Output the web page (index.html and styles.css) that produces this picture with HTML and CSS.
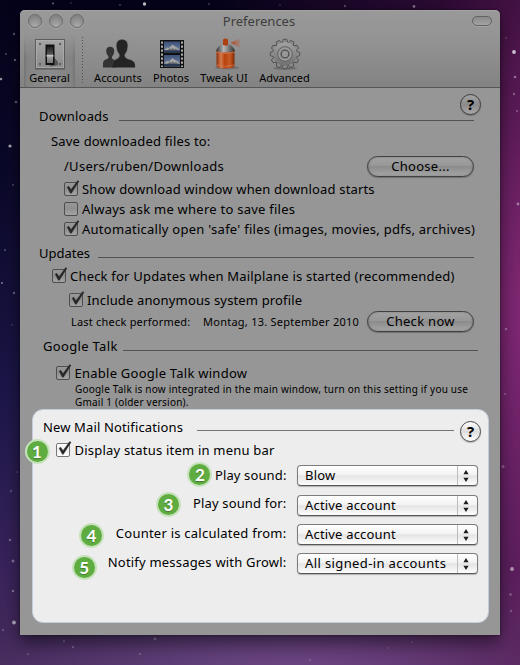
FILE: index.html
```html
<!DOCTYPE html>
<html lang="en">
<head>
<meta charset="utf-8">
<title>Preferences</title>
<link rel="stylesheet" href="styles.css">
</head>
<body>
<svg class="stars" viewBox="0 0 520 665" aria-hidden="true">
  <g fill="#fff">
    <circle cx="144.500" cy="4" r="1.700" opacity=".75"/><circle cx="53" cy="3.500" r="1" opacity=".4"/><circle cx="71" cy="3" r=".8" opacity=".25"/>
    <circle cx="120" cy="5" r=".9" opacity=".25"/><circle cx="209" cy="4" r=".9" opacity=".25"/><circle cx="345" cy="6" r="1.100" opacity=".3"/><circle cx="414" cy="6.500" r="1.400" opacity=".4"/><circle cx="280" cy="5" r=".9" opacity=".15"/>
    <circle cx="514" cy="52" r="1.900" opacity=".75"/><circle cx="515" cy="77" r="1.300" opacity=".4"/><circle cx="514" cy="94" r="1.200" opacity=".3"/><circle cx="506" cy="38" r="1" opacity=".2"/><circle cx="517" cy="111" r="1" opacity=".3"/><circle cx="518" cy="204" r="1.400" opacity=".4"/>
    <circle cx="14" cy="34" r="1.200" opacity=".3"/><circle cx="6" cy="54" r="1.100" opacity=".25"/><circle cx="15" cy="60" r="1.200" opacity=".35"/><circle cx="1" cy="79" r="1.300" opacity=".55"/><circle cx="16" cy="102" r="1.300" opacity=".35"/><circle cx="10" cy="146" r="1.600" opacity=".65"/>
    <circle cx="13" cy="185" r="1" opacity=".25"/><circle cx="5" cy="250" r="1" opacity=".3"/><circle cx="2" cy="283" r="1" opacity=".45"/><circle cx="14" cy="293" r="1.200" opacity=".35"/><circle cx="12" cy="325" r="1" opacity=".15"/><circle cx="17" cy="472" r="1" opacity=".15"/>
    <circle cx="11" cy="491" r="1.300" opacity=".2"/><circle cx="10" cy="540" r="1.300" opacity=".3"/><circle cx="13" cy="561" r="1.500" opacity=".35"/><circle cx="13" cy="591" r="1.300" opacity=".35"/><circle cx="14" cy="622.500" r="1.900" opacity=".6"/><circle cx="3" cy="630" r="1.200" opacity=".2"/>
    <circle cx="155" cy="639" r="1.400" opacity=".3"/><circle cx="64" cy="641" r="1.100" opacity=".25"/><circle cx="73" cy="647" r="1.100" opacity=".3"/><circle cx="28" cy="654" r="1" opacity=".2"/><circle cx="140" cy="654" r="1" opacity=".25"/><circle cx="388" cy="648" r="1" opacity=".15"/><circle cx="412" cy="642" r="1.100" opacity=".15"/>
    <circle cx="506" cy="329" r="1.300" opacity=".3"/><circle cx="505" cy="394" r="1.300" opacity=".2"/><circle cx="503" cy="466.500" r="1.500" opacity=".3"/><circle cx="512" cy="569" r="1.900" opacity=".55"/><circle cx="510.500" cy="594.500" r="1.300" opacity=".3"/><circle cx="511" cy="611" r="1.200" opacity=".25"/><circle cx="310" cy="660" r="1.200" opacity=".15"/>
  </g>
</svg>

<svg class="defs" aria-hidden="true">
  <defs>
    <symbol id="tick" viewBox="0 0 18 18">
      <path d="M4.200 8.200 L5.700 7.300 L8 10.800 L14.600 1.700 L16 2.200 L8.300 14.200 H7.400Z" fill="currentColor" stroke="currentColor" stroke-width=".5"/>
    </symbol>
    <symbol id="arrows" viewBox="0 0 6 12">
      <path d="M3 0 L5.600 4.200 H.4Z M3 12 L5.600 7.800 H.4Z" fill="#1c1c1c"/>
    </symbol>
  </defs>
</svg>

<main class="window">
  <header class="titlebar">
    <div class="lights"><i></i><i></i><i></i></div>
    <h1>Preferences</h1>
    <i class="pill"></i>
  </header>

  <nav class="toolbar">
    <a class="tool tool-general selected">
      <svg width="32" height="32" viewBox="0 0 32 32">
        <defs><linearGradient id="plate" x2="0" y2="1"><stop stop-color="#a6a6a6"/><stop offset="1" stop-color="#8a8a8a"/></linearGradient>
        <linearGradient id="lever" x2="0" y2="1"><stop stop-color="#222"/><stop offset=".45" stop-color="#555"/><stop offset=".5" stop-color="#aaa"/><stop offset="1" stop-color="#777"/></linearGradient></defs>
        <rect x="1" y="30" width="30" height="1.500" fill="#555"/>
        <rect x="1.500" y="1.500" width="29" height="29" fill="url(#plate)" stroke="#5c5c5c"/>
        <rect x="2.500" y="2.500" width="27" height="27" fill="none" stroke="#b2b2b2" stroke-width=".7"/>
        <g fill="#606060"><circle cx="6" cy="6" r="1.200"/><circle cx="26" cy="6" r="1.200"/><circle cx="6" cy="26" r="1.200"/><circle cx="26" cy="26" r="1.200"/></g>
        <path d="M19 18 L24 24 V27 L16 28.500Z" fill="#444" opacity=".75"/>
        <rect x="11.500" y="6.500" width="9" height="20.500" fill="#111"/>
        <rect x="13" y="9" width="6" height="16" fill="url(#lever)"/>
        <rect x="12.500" y="17" width="7" height="1.500" fill="#c0c0c0"/>
      </svg>
      <span>General</span>
    </a>
    <i class="divider"></i>
    <a class="tool tool-accounts">
      <svg width="34" height="32" viewBox="0 0 34 32">
        <path d="M1 29.500 V25 Q1.300 22.200 4.500 21.300 Q6.800 20.500 6.600 18.700 Q4 15.500 4.100 12.500 Q4.500 8.700 8.200 8.700 Q12 8.700 12.300 12.500 Q12.500 15.500 10 18.700 V20.500 L14 23 V29.500Z" fill="#333"/>
        <path d="M10 29.500 V27 Q10.200 22.600 14 21.400 Q18 20 17.600 16.800 Q14.500 13 14.400 7.800 Q14.600 1.500 20 1.500 Q25.500 1.500 25.700 7.800 Q25.600 13 22.600 16.800 Q22.300 20 26.200 21.300 Q32.600 22.700 33 26.700 V29.500Z" fill="#242424" stroke="#555" stroke-width=".4"/>
      </svg>
      <span>Accounts</span>
    </a>
    <a class="tool tool-photos">
      <svg width="26" height="32" viewBox="0 0 26 32">
        <defs><linearGradient id="sky" x2="0" y2="1"><stop stop-color="#3a5078"/><stop offset="1" stop-color="#7c8ba6"/></linearGradient></defs>
        <rect x="1" y="2" width="24" height="28" fill="#111"/>
        <path d="M3 3.500V29M23 3.500V29" stroke="#aaa" stroke-width="2" stroke-dasharray="2.200 1.800"/>
        <rect x="5" y="3.500" width="16" height="11.500" fill="url(#sky)"/>
        <path d="M5 12.500 L8 9.500 L10 10 L13.500 6.500 L16 8.500 L18 9.500 L21 12.500Z" fill="#a6a6a6"/><path d="M8 12.500 l3-2.500 1 1.500 2-2 1 2 2-1 2 2z" fill="#6a6d74"/><rect x="5" y="12.300" width="16" height="2.700" fill="#2a3952"/>
        <rect x="5" y="17" width="16" height="11.500" fill="url(#sky)"/>
        <path d="M5 26 L8 23 L10 23.500 L13.500 20 L16 22 L18 23 L21 26Z" fill="#a6a6a6"/><path d="M8 26 l3-2.500 1 1.500 2-2 1 2 2-1 2 2z" fill="#6a6d74"/><rect x="5" y="25.800" width="16" height="2.700" fill="#2a3952"/>
      </svg>
      <span>Photos</span>
    </a>
    <a class="tool tool-tweak">
      <svg width="30" height="32" viewBox="0 0 30 32">
        <defs><linearGradient id="can"><stop stop-color="#8c2e06"/><stop offset=".25" stop-color="#d47b50"/><stop offset=".45" stop-color="#b9430f"/><stop offset=".75" stop-color="#c85a25"/><stop offset="1" stop-color="#7b2705"/></linearGradient>
        <linearGradient id="cap"><stop stop-color="#333"/><stop offset=".4" stop-color="#b5b5b5"/><stop offset="1" stop-color="#303030"/></linearGradient>
        <linearGradient id="spray"><stop stop-color="#b53c12"/><stop offset="1" stop-color="#b56a50" stop-opacity=".3"/></linearGradient></defs>
        <ellipse cx="13" cy="29.800" rx="12" ry="1.700" fill="#666" opacity=".7"/>
        <path d="M2.500 12 H20.500 V28 Q20 30.500 11.500 30.500 Q3 30.500 2.500 28Z" fill="url(#can)"/>
        <path d="M2.200 13 Q2.600 9 8 6.500 H15 Q20.400 9 20.800 13 Q11.500 16 2.200 13Z" fill="url(#cap)"/>
        <path d="M2.500 14.300 Q11.500 17 20.500 14.300 M2.500 27 Q11.500 29.800 20.500 27" fill="none" stroke="#ce7650" stroke-width=".8"/>
        <path d="M9 7 V1.500 Q11.500 -.5 14 1.500 V7 Q11.500 8 9 7Z" fill="#ae3f12"/>
        <path d="M16.500 4.700 L26 .7 V9.700Z" fill="url(#spray)"/>
      </svg>
      <span>Tweak UI</span>
    </a>
    <a class="tool tool-advanced">
      <svg width="32" height="32" viewBox="0 0 32 32">
        <defs><linearGradient id="metal" x2="0" y2="1"><stop stop-color="#a2a2a2"/><stop offset="1" stop-color="#6f6f6f"/></linearGradient></defs>
        <ellipse cx="16" cy="30.300" rx="12" ry="1.500" fill="#5c5c5c" opacity=".7"/>
        <circle cx="16" cy="16" r="12" fill="#8b8b8b" stroke="#484848" stroke-width=".9"/>
        <g fill="#8b8b8b" stroke="#484848" stroke-width=".8">
          <path id="teeth" d="M13.300 4.500 L14.300 1.300 H17.700 L18.700 4.500 V27.500 L17.700 30.700 H14.300 L13.300 27.500Z"/>
          <use href="#teeth" transform="rotate(30 16 16)"/><use href="#teeth" transform="rotate(60 16 16)"/><use href="#teeth" transform="rotate(90 16 16)"/><use href="#teeth" transform="rotate(120 16 16)"/><use href="#teeth" transform="rotate(150 16 16)"/>
        </g>
        <circle cx="16" cy="16" r="11.800" fill="url(#metal)"/>
        <circle cx="16" cy="16" r="7.300" fill="#8a8a8a" stroke="#606060"/>
        <circle cx="16" cy="16" r="6" fill="none" stroke="#a8a8a8" stroke-width=".8"/>
        <circle cx="16" cy="16" r="3.800" fill="#979797" stroke="#494949" stroke-width="1.100"/>
      </svg>
      <span>Advanced</span>
    </a>
  </nav>

  <section class="body">
    <div class="heading h-downloads"><h2>Downloads</h2><hr><button class="help">?</button></div>
    <div class="row r-save"><span>Save downloaded files to:</span></div>
    <div class="row r-path"><span>/Users/ruben/Downloads</span><button class="push push-choose">Choose...</button></div>
    <label class="row r-show"><i class="box"><svg><use href="#tick"/></svg></i><span>Show download window when download starts</span></label>
    <label class="row r-ask"><i class="box"></i><span>Always ask me where to save files</span></label>
    <label class="row r-auto"><i class="box"><svg><use href="#tick"/></svg></i><span>Automatically open 'safe' files (images, movies, pdfs, archives)</span></label>

    <div class="heading h-updates"><h2>Updates</h2><hr></div>
    <label class="row r-check"><i class="box"><svg><use href="#tick"/></svg></i><span>Check for Updates when Mailplane is started (recommended)</span></label>
    <label class="row r-include"><i class="box"><svg><use href="#tick"/></svg></i><span>Include anonymous system profile</span></label>
    <div class="row r-last"><span class="last-label">Last check performed:</span><span class="last-date">Montag, 13. September 2010</span><button class="push push-check">Check now</button></div>

    <div class="heading h-talk"><h2>Google Talk</h2><hr></div>
    <label class="row r-enable"><i class="box"><svg><use href="#tick"/></svg></i><span>Enable Google Talk window</span></label>
    <p class="note">Google Talk is now integrated in the main window, turn on this setting if you use<br>Gmail 1 (older version).</p>
  </section>

  <section class="panel">
    <div class="heading h-mail"><h2>New Mail Notifications</h2><hr><button class="help">?</button></div>
    <label class="row r-display"><b class="badge">1</b><i class="box"><svg><use href="#tick"/></svg></i><span>Display status item in menu bar</span></label>
    <div class="field f-sound"><span class="name"><b class="badge">2</b>Play sound:</span><button class="select">Blow<svg><use href="#arrows"/></svg></button></div>
    <div class="field f-for"><span class="name"><b class="badge">3</b>Play sound for:</span><button class="select">Active account<svg><use href="#arrows"/></svg></button></div>
    <div class="field f-counter"><span class="name"><b class="badge">4</b>Counter is calculated from:</span><button class="select">Active account<svg><use href="#arrows"/></svg></button></div>
    <div class="field f-growl"><span class="name"><b class="badge">5</b>Notify messages with Growl:</span><button class="select wide">All signed-in accounts<svg><use href="#arrows"/></svg></button></div>
  </section>
</main>
</body>
</html>
```
FILE: styles.css
```css
* { box-sizing: border-box; }

body {
  margin: 0;
  width: 520px;
  height: 665px;
  overflow: hidden;
  padding: 10px 20px 30px;
  position: relative;
  font: 13px/20px "Noto Sans", "Open Sans", sans-serif;
  letter-spacing: .18px;
  color: #000;
  background:
    radial-gradient(ellipse 190px 360px at 540px 310px, rgba(142, 44, 124, .9), rgba(142, 44, 124, 0)),
    radial-gradient(ellipse 320px 170px at 300px 700px, rgba(124, 84, 148, .8), rgba(124, 84, 148, 0)),
    linear-gradient(90deg, rgba(90, 20, 80, 0) 40%, rgba(90, 20, 80, .6)),
    linear-gradient(180deg, #05031a 0, #0a0828 25%, #1b1647 58%, #38235a 85%, #472c5e 100%);
}

.stars { position: absolute; inset: 0; width: 520px; height: 665px; }
.defs { position: absolute; width: 0; height: 0; }

h1, h2, p { margin: 0; font: inherit; }
button { font: inherit; letter-spacing: inherit; color: inherit; padding: 0; margin: 0; }
span, h1, h2, p, button { white-space: nowrap; }

.window {
  position: relative;
  width: 480px;
  height: 625px;
  display: flex;
  flex-direction: column;
  background: #969696;
  border-radius: 5px 5px 0 0;
  box-shadow: 0 8px 18px rgba(0, 0, 0, .5), 0 0 3px rgba(0, 0, 0, .45);
}

/* title bar and toolbar */
.titlebar {
  height: 24px;
  padding: 0 8px;
  display: grid;
  grid-template-columns: 120px 1fr 120px;
  align-items: start;
  background: linear-gradient(#999, #959595);
  border-radius: 5px 5px 0 0;
  border-top: 1px solid #a4a4a4;
}
.titlebar h1 { text-align: center; color: #3d3d3d; letter-spacing: 0; margin-left: -2px; }
.lights { display: flex; gap: 7px; padding-top: 3px; }
.lights i {
  width: 14px;
  height: 14px;
  border-radius: 50%;
  border: 1px solid #6c6c6c;
  background: radial-gradient(circle at 50% 90%, #aaa, #858585 75%);
  box-shadow: 0 1px 0 #a9a9a9;
}
.pill {
  justify-self: end;
  width: 20px;
  height: 10px;
  margin-top: 5px;
  border: 1px solid #626262;
  border-radius: 5px;
  background: linear-gradient(#8a8a8a, #a3a3a3);
  box-shadow: 0 1px 0 #a5a5a5;
}
.toolbar {
  height: 54px;
  padding-left: 4px;
  display: flex;
  background: linear-gradient(#959595, #838383);
  border-bottom: 1px solid #565656;
}
.tool {
  height: 53px;
  display: flex;
  flex-direction: column;
  align-items: center;
  font-size: 11px;
  line-height: 16px;
  letter-spacing: 0;
}
.tool svg { margin: 4px 0 0; flex: none; position: relative; left: 1px; }
.tool-general { width: 51px; }
.tool-general svg { left: .5px; }
.selected {
  background:
    linear-gradient(#959595, rgba(149, 149, 149, 0) 45%),
    linear-gradient(90deg, #747474 0, #838383 6%, #8c8c8c 50%, #838383 94%, #747474 100%);
}
.divider {
  width: 1px;
  height: 47px;
  margin: 3px 11px 0 7px;
  background: repeating-linear-gradient(#4e4e4e 0 1px, transparent 1px 3px);
}
.tool-accounts { width: 48px; margin-right: 11px; letter-spacing: .1px; }
.tool-photos { width: 36px; margin-right: 11px; }
.tool-tweak { width: 48px; margin-right: 11px; }
.tool-tweak svg { left: 5px; top: -.5px; }
.tool-advanced { width: 51px; }
.tool-advanced svg { left: .5px; top: -.5px; }

/* rows */
.body { padding-top: 18px; height: 321px; flex: none; }
.heading { position: relative; height: 20px; display: flex; align-items: flex-start; }
.heading hr { flex: 1; height: 1px; border: 0; margin: 14px 0 0; background: #525252; }
.row { display: flex; align-items: center; height: 20px; }

.h-downloads { margin: 0 26px 0 19px; }
.h-downloads hr { margin-left: 10px; }
.r-save { margin: 5px 0 0 31px; }
.r-path { margin: 5px 26px 0 44px; height: 21px; justify-content: space-between; letter-spacing: .27px; }
.r-path span { margin-top: -1px; }
.r-show { margin: 2px 0 0 44px; letter-spacing: .16px; }
.r-ask { margin-left: 44px; letter-spacing: .25px; }
.r-auto { margin-left: 44px; letter-spacing: .265px; }
.h-updates { margin: 4px 26px 0 19px; letter-spacing: 0; }
.h-updates hr { margin-left: 8px; }
.r-check { margin: 3px 0 0 32px; letter-spacing: .2px; }
.r-include { margin: 4px 0 0 49px; letter-spacing: .15px; }
.r-last { margin: 1px 26px 0 51px; height: 21px; font-size: 11px; letter-spacing: .21px; }
.last-label { width: 132px; }
.last-date { letter-spacing: .25px; }
.h-talk { margin: 4px 22px 0 23px; letter-spacing: .33px; }
.h-talk hr { margin-left: 5px; }
.r-enable { margin: 7px 0 0 36px; letter-spacing: .25px; }
.note { margin: 0 0 0 55px; font-size: 10px; line-height: 13px; letter-spacing: .21px; }

.box {
  position: relative;
  flex: none;
  width: 14px;
  height: 14px;
  margin-right: 4px;
  border: 1px solid #4e4e4e;
  border-radius: 2px;
  background: linear-gradient(#999, #8f8f8f 45%, #a3a3a3);
}
.box svg { position: absolute; left: -2px; top: -4px; width: 18px; height: 18px; color: #262626; }
.r-enable .box, .r-display .box { margin-right: 4.500px; }

.push {
  width: 107px;
  height: 21px;
  font-size: 13px;
  line-height: 18px;
  letter-spacing: .3px;
  border: 1px solid #404040;
  border-radius: 11px;
  background: linear-gradient(#a3a3a3, #979797 45%, #8c8c8c 50%, #a5a5a5);
  box-shadow: 0 1px 1px rgba(0, 0, 0, .25), inset 0 0 2px rgba(0, 0, 0, .3);
  padding-bottom: 2px;
}
.push-check { margin-left: auto; }

.help {
  position: absolute;
  width: 21px;
  height: 21px;
  border: 1.500px solid #3c3c3c;
  border-radius: 50%;
  background: linear-gradient(#a3a3a3, #8b8b8b 50%, #a6a6a6);
  font: bold 15px/17px "Noto Sans", sans-serif;
  letter-spacing: 0;
  text-align: center;
  box-shadow: 0 1px 1px rgba(0, 0, 0, .25);
}
.h-downloads .help { right: -7px; top: -12px; }

/* highlighted panel */
.panel {
  position: relative;
  flex: none;
  width: 457px;
  height: 214px;
  margin: 0 0 0 12px;
  padding-top: 7px;
  background: #ededed;
  border: 1px solid #c3cbdc;
  border-radius: 11px;
}
.h-mail { margin: 0 34px 0 10px; letter-spacing: .14px; }
.h-mail hr { margin: 13px 0 0 14px; background: #757575; }
.h-mail .help { right: -27px; top: 4px; border-color: #484848; background: linear-gradient(#fff, #dcdcdc 50%, #fff); }
.r-display { position: relative; margin: 3px 0 0 23px; letter-spacing: .21px; }
.r-display .box { border-color: #777; background: linear-gradient(#fff, #ececec 45%, #fff); }
.field {
  position: relative;
  height: 21px;
  display: grid;
  grid-template-columns: 253.500px 181px;
  column-gap: 10.500px;
}
.name { position: relative; justify-self: end; height: 20px; }
.f-sound { margin-top: 5px; letter-spacing: .13px; }
.f-for { margin-top: 9px; letter-spacing: .15px; }
.f-for .name { margin-top: -2px; }
.f-counter { margin-top: 8px; letter-spacing: .24px; }
.f-counter .name { margin-top: -1px; }
.f-growl { margin-top: 8px; letter-spacing: .2px; }
.f-growl .name { margin-top: -1px; }

.select {
  display: flex;
  align-items: center;
  height: 21px;
  padding: 0 0 1px 7px;
  line-height: 18px;
  letter-spacing: .18px;
  text-align: left;
  border: 1px solid #7c7c7c;
  border-bottom-color: #555;
  border-radius: 4px;
  background:
    linear-gradient(#bdbdbd, #bdbdbd) 159px 0 / 1px 100% no-repeat,
    linear-gradient(#fff, #f3f3f3 45%, #e4e4e4 52%, #fdfdfd);
  box-shadow: 0 1px 1px rgba(0, 0, 0, .25);
}
.select.wide { letter-spacing: .38px; }
.select svg { width: 6px; height: 12px; margin: 1px 8px 0 auto; }

.badge {
  position: absolute;
  width: 25px;
  height: 25px;
  border: 2px solid #c6e2bb;
  border-radius: 50%;
  background: #5fad41;
  color: #fff;
  font: bold 17px/21px Lato, sans-serif;
  letter-spacing: 0;
  text-align: center;
  text-shadow: 0 1px 1px rgba(0, 0, 0, .3);
}
.r-display .badge { left: -31.500px; top: -1px; }
.f-sound .badge { left: -27.500px; top: -3.500px; }
.f-for .badge { left: -37px; top: -1px; }
.f-counter .badge { left: -37px; top: 0; }
.f-growl .badge { left: -36px; top: 3px; }
```
